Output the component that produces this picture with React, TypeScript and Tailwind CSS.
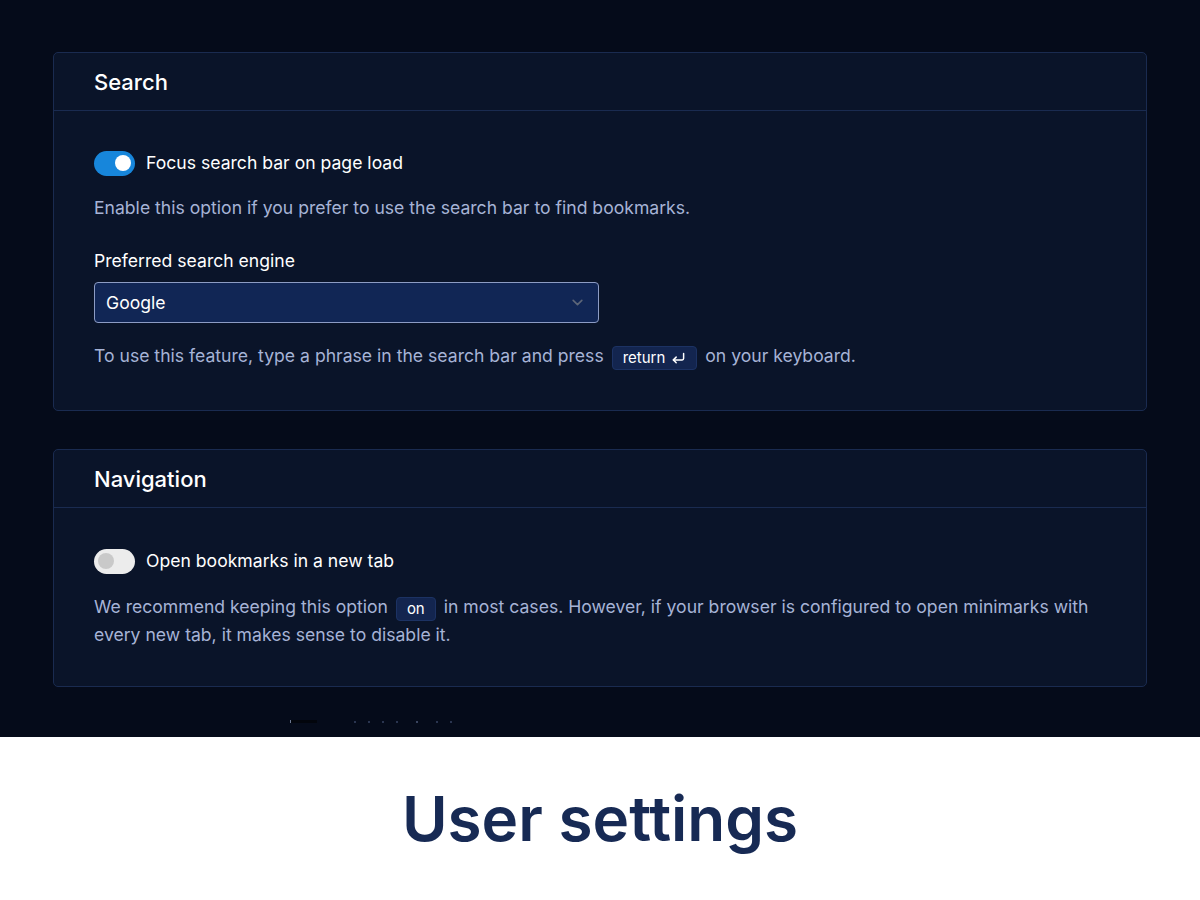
import React from "react";

function Toggle({ on }: { on: boolean }) {
  return on ? (
    <span className="flex h-[25px] w-[41px] shrink-0 items-center justify-end rounded-full bg-[#1786db] px-[4px]">
      <span className="h-4 w-4 rounded-full bg-white" />
    </span>
  ) : (
    <span className="flex h-[25px] w-[41px] shrink-0 items-center justify-start rounded-full bg-[#ececec] px-[4px]">
      <span className="h-4 w-4 rounded-full bg-[#c9c9c9]" />
    </span>
  );
}

function Kbd({ children }: { children: React.ReactNode }) {
  return (
    <span className="mx-[3px] inline-flex h-[24px] items-center rounded-[4px] border border-[#1c3263] bg-[#13254f] px-[10px] align-[-1px] text-[15px] leading-[20px] text-white">
      {children}
    </span>
  );
}

function Card({ title, bottom, children }: { title: string; bottom: string; children: React.ReactNode }) {
  return (
    <section className="rounded-[5px] border border-[#1a2b50] bg-[#0a1429]">
      <div className="flex h-[58px] items-center border-b border-[#1a2b50] px-10">
        <h2 className="text-[22px] font-medium text-white">{title}</h2>
      </div>
      <div className={bottom === "short" ? "px-10 pt-[40px] pb-[38px]" : "px-10 pt-[39px] pb-[40px]"}>{children}</div>
    </section>
  );
}

export default function App() {
  return (
    <div className="flex h-[900px] w-[1200px] flex-col font-['Inter',sans-serif] text-[17.6px] leading-[26px]">
      <div className="flex h-[737px] flex-col gap-[38px] bg-[#050b1a] px-[53px] pt-[52px]">
        <Card title="Search" bottom="normal">
          <label className="flex items-center gap-[11px]">
            <Toggle on />
            <span className="text-white">Focus search bar on page load</span>
          </label>
          <p className="mt-[19px] text-[#a6b3d6]">
            Enable this option if you prefer to use the search bar to find bookmarks.
          </p>
          <p className="mt-[27px] text-white">Preferred search engine</p>
          <div className="mt-[8px] flex h-[41px] w-[505px] items-center justify-between rounded-[4px] border border-[#8d9cc4] bg-[#112655] px-[11px]">
            <span className="text-white">Google</span>
            <svg className="mr-[3px]" width="13" height="13" viewBox="0 0 24 24" fill="none" stroke="#5d6678" strokeWidth="3" strokeLinecap="round" strokeLinejoin="round">
              <path d="M4 8l8 8 8-8" />
            </svg>
          </div>
          <p className="mt-[20px] text-[#a6b3d6]">
            To use this feature, type a phrase in the search bar and press{" "}
            <Kbd>
              return
              <svg className="ml-[6px]" width="15" height="13" viewBox="0 0 16 14" fill="none" stroke="white" strokeWidth="1.6" strokeLinecap="round" strokeLinejoin="round">
                <path d="M13.5 1.5v5.5a1.5 1.5 0 0 1-1.5 1.5H2.5" />
                <path d="M5.5 5.5l-3 3 3 3" />
              </svg>
            </Kbd>{" "}
            on your keyboard.
          </p>
        </Card>
        <Card title="Navigation" bottom="short">
          <label className="flex items-center gap-[11px]">
            <Toggle on={false} />
            <span className="text-white">Open bookmarks in a new tab</span>
          </label>
          <p className="mt-[19px] leading-[27px] text-[#a6b3d6]">
            We recommend keeping this option <Kbd>on</Kbd> in most cases. However, if your browser is configured to open
            minimarks with every new tab, it makes sense to disable it.
          </p>
        </Card>
        <div className="-mt-[5px] flex items-center pl-[237px]">
          <span className="h-[3px] w-[27px] border-l border-[#6b7891] bg-[#02050c]" />
          <span className="ml-[37px] flex gap-[12px]">
            <span className="h-[2px] w-[2px] bg-[#2a3550]" />
            <span className="h-[2px] w-[2px] bg-[#2a3550]" />
            <span className="h-[2px] w-[2px] bg-[#2a3550]" />
            <span className="h-[2px] w-[2px] bg-[#2a3550]" />
            <span className="ml-[6px] h-[2px] w-[2px] bg-[#3a4560]" />
            <span className="ml-[6px] h-[2px] w-[2px] bg-[#2a3550]" />
            <span className="h-[2px] w-[2px] bg-[#2a3550]" />
          </span>
        </div>
      </div>
      <div className="flex flex-1 items-center justify-center bg-white">
        <h1 className="text-[62px] font-semibold text-[#172a54]">User settings</h1>
      </div>
    </div>
  );
}
